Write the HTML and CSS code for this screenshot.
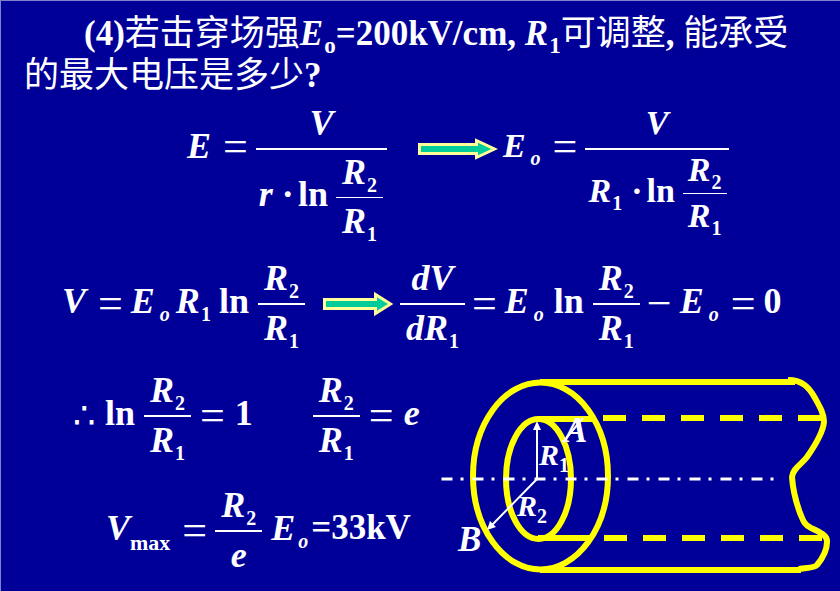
FILE: index.html
```html
<!DOCTYPE html>
<html lang="zh-CN">
<head>
<meta charset="utf-8">
<meta name="viewport" content="width=device-width, initial-scale=1">
<title>击穿场强</title>
<link rel="stylesheet" href="styles.css">
</head>
<body>
<main class="slide">
  <h1 class="question">(4)<span class="zh">若击穿场强</span><i>E</i><sub>o</sub>=200kV/cm, <i>R</i><sub>1</sub><span class="zh">可调整</span>, <span class="zh">能承受的最大电压是多少</span>?</h1>

  <section class="row row-tall">
    <div class="eq tall">
      <span class="term"><i>E</i></span><span class="op">=</span>
      <div class="frac">
        <div class="num"><i>V</i></div>
        <div class="den eq">
          <span class="term"><i>r</i></span><span class="term dot">·</span><span class="term">ln</span>
          <div class="frac inner thin"><div class="num"><i>R</i><sub>2</sub></div><div class="den"><i>R</i><sub>1</sub></div></div>
        </div>
      </div>
    </div>
    <svg class="arrow" width="80" height="24" viewBox="0 0 80 24" aria-hidden="true"><path d="M1.500 7.500H58.500V3.500L76.500 12L58.500 20.500V16.500H1.500Z"/></svg>
    <div class="eq tall compact">
      <span class="term"><i>E</i><sub class="far"><i>o</i></sub></span><span class="op">=</span>
      <div class="frac">
        <div class="num"><i>V</i></div>
        <div class="den eq">
          <span class="term"><i>R</i><sub>1</sub></span><span class="term dot">·</span><span class="term">ln</span>
          <div class="frac inner thin"><div class="num"><i>R</i><sub>2</sub></div><div class="den"><i>R</i><sub>1</sub></div></div>
        </div>
      </div>
    </div>
  </section>

  <section class="row row-derive">
    <div class="eq">
      <span class="term"><i>V</i></span><span class="op">=</span>
      <span class="term"><i>E</i><sub class="far"><i>o</i></sub></span><span class="term"><i>R</i><sub>1</sub></span><span class="term func">ln</span>
      <div class="frac inner"><div class="num"><i>R</i><sub>2</sub></div><div class="den"><i>R</i><sub>1</sub></div></div>
    </div>
    <svg class="arrow" width="71" height="26" viewBox="0 0 71 26" aria-hidden="true"><path d="M1.500 8.500H52.500V3.500L67.500 13L52.500 22.500V17.500H1.500Z"/></svg>
    <div class="eq">
      <div class="frac inner"><div class="num"><i>dV</i></div><div class="den"><i>dR</i><sub>1</sub></div></div>
      <span class="op after-frac">=</span>
      <span class="term"><i>E</i><sub class="far"><i>o</i></sub></span><span class="term func wide">ln</span>
      <div class="frac inner"><div class="num"><i>R</i><sub>2</sub></div><div class="den"><i>R</i><sub>1</sub></div></div>
      <span class="op after-frac">−</span>
      <span class="term"><i>E</i><sub class="far"><i>o</i></sub></span><span class="op">=</span><span class="term">0</span>
    </div>
  </section>

  <div class="lower">
    <div class="results">
      <section class="row row-so">
        <div class="eq">
          <span class="therefore">∴</span><span class="term func">ln</span>
          <div class="frac inner"><div class="num"><i>R</i><sub>2</sub></div><div class="den"><i>R</i><sub>1</sub></div></div>
          <span class="op after-frac">=</span><span class="term">1</span>
        </div>
        <div class="eq">
          <div class="frac inner"><div class="num"><i>R</i><sub>2</sub></div><div class="den"><i>R</i><sub>1</sub></div></div>
          <span class="op after-frac">=</span><span class="term"><i>e</i></span>
        </div>
      </section>
      <section class="row row-max">
        <div class="eq">
          <span class="term"><i>V</i><sub class="max">max</sub></span><span class="op">=</span>
          <div class="frac inner"><div class="num"><i>R</i><sub>2</sub></div><div class="den"><i>e</i></div></div>
          <span class="term factor"><i>E</i><sub class="near"><i>o</i></sub></span><span class="term answer">=33kV</span>
        </div>
      </section>
    </div>

    <svg class="cable" viewBox="440 372 392 206" role="img" aria-label="同轴电缆">
      <g class="shell">
        <ellipse cx="540.500" cy="476" rx="67.500" ry="93.500"/>
        <ellipse cx="538.500" cy="479" rx="32.500" ry="60"/>
        <path d="M540 382H795M540 570H801M538 419H594M538 538H592"/>
        <path class="hidden-edge" d="M603 418H823"/>
        <path class="hidden-edge" d="M604 538H824"/>
        <path d="M788 380C802 380 809 387 815 398C820 407 824 414 824 422C823 432 814 447 807 457C801 465 793 468 792 477C793 492 796 502 800 513C803 520 804 525 811 528C820 532 828 536 827 542C827 550 822 559 817 565C813 569 806 567 799 569"/>
      </g>
      <path class="axis" d="M441.500 479H774"/>
      <g class="pointer">
        <path d="M537 479V428M537 479L492 525M563 442L583 418"/>
        <path class="head" d="M537 421L541 430H533ZM487 530L490 521L496 527Z"/>
      </g>
      <g class="label">
        <text x="564" y="442" class="big">A</text>
        <text x="458" y="551" class="big">B</text>
        <text x="539" y="465">R</text><text x="559" y="472" class="index">1</text>
        <text x="517" y="516">R</text><text x="537" y="523" class="index">2</text>
      </g>
    </svg>
  </div>
</main>
</body>
</html>
```
FILE: styles.css
```css
* { box-sizing: border-box; }

body {
  margin: 0;
  background: #000099;
  color: #fff;
  font-family: "Liberation Serif", "Noto Sans CJK SC", serif;
  font-weight: 700;
  font-size: 36px;
}

.slide {
  min-height: 100vh;
  padding-top: 12px;
  border-top: 1px solid #8080cc;
  border-left: 1px solid #8080cc;
}

.question {
  margin: 0;
  padding: 0 23px;
  font-size: 35px;
  line-height: 42px;
  text-indent: 60px;
}

.zh { font-weight: 400; }

sub {
  margin-left: 1px;
  font-size: 20px;
  line-height: 0;
  vertical-align: -8px;
}

.question sub { font-size: 23px; }
sub.far { margin-left: 5px; }
sub.near { margin-left: 3px; }
sub.max { margin-left: 0; font-size: 22px; vertical-align: -10px; }

/* Equations */
.row { display: flex; align-items: center; }
.row-tall { align-items: flex-start; margin-top: 4px; padding-left: 186px; }
.row-derive { margin-top: 12px; padding-left: 61px; }
.row-so { gap: 60px; }
.row-max { margin-top: 20px; padding-left: 32px; }

.eq { display: flex; align-items: center; white-space: nowrap; }
.term { line-height: 40px; padding-bottom: 6px; }
.term + .term { margin-left: 6px; }
.term.func { margin-right: 9px; }
.term + .term.func { margin-left: 8px; }
.term + .term.wide { margin-left: 10px; }
.term + .term.dot { margin-left: 9px; }
.dot + .term { margin-left: 4px; }
.term.factor { margin-left: 9px; }

.op {
  margin: 0 8px 0 12px;
  font-size: 44px;
  font-weight: 400;
  line-height: 40px;
}
.op.after-frac { margin-left: 7px; }
.row-so .op.after-frac { margin: 0 10px 0 9px; }

.tall { align-items: flex-start; }
.tall > .term { margin-top: 25px; }
.tall > .op { margin-top: 26px; }

.frac { display: grid; justify-items: center; }
.num { line-height: 44px; padding-bottom: 3px; }
.den { line-height: 46px; border-top: 2px solid #fff; width: 100%; text-align: center; }
.num, .den { padding-left: 6px; padding-right: 6px; }
.den.eq { padding-left: 3px; padding-right: 4px; }
.den.eq .frac { margin-left: 8px; }
.thin .den { border-top-width: 1px; }

.compact { font-size: 34px; }
.compact .num { line-height: 42px; }
.compact .den { line-height: 44px; }
.compact .inner .num { line-height: 40px; }
.compact > .frac > .num { line-height: 44px; }
.compact .den.eq { padding-right: 2px; }
.compact .inner .num, .compact .inner .den { padding-left: 5px; padding-right: 5px; }

.arrow { flex: none; margin: 0 6px 0 18px; fill: #00cc99; stroke: #ffff99; stroke-width: 3; }
.row-tall .arrow { margin: 36px 5px 0 31px; }

.therefore { font-family: "DejaVu Sans", sans-serif; font-weight: 400; font-size: 36px; line-height: 40px; margin: 0 9px 0 -1px; }
.term + .answer { margin-left: 3px; font-size: 35px; }

/* Lower half: results beside the cable drawing */
.lower { display: flex; align-items: flex-start; margin-top: 17px; padding-left: 73px; }
.results { flex: 0 0 366px; }
.cable { flex: 1 1 0; min-width: 0; margin: 4px 8px 0 0; }

.shell { fill: none; stroke: #ffff00; stroke-width: 6; }
.hidden-edge { stroke-dasharray: 23 16; }
.axis { fill: none; stroke: #fff; stroke-width: 3; stroke-dasharray: 11 8 3 9; }
.pointer { fill: none; stroke: #fff; stroke-width: 2; }
.head { fill: #fff; stroke: none; }
.label { fill: #fff; font-size: 30px; font-style: italic; }
.big { font-size: 35px; }
.index { font-size: 20px; font-style: normal; }
```
